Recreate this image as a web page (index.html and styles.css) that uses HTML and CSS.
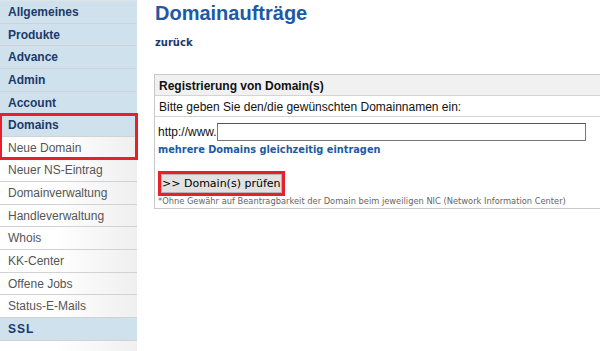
FILE: index.html
```html
<!DOCTYPE html>
<html lang="de">
<head>
  <meta charset="UTF-8">
  <meta name="viewport" content="width=device-width, initial-scale=1.0">
  <title>Domainaufträge</title>
  <link rel="stylesheet" href="styles.css">
</head>
<body>

  <div class="layout">
    <nav class="sidebar">
      <a class="nav-top" href="#">Allgemeines</a>
      <a class="nav-top" href="#">Produkte</a>
      <a class="nav-top" href="#">Advance</a>
      <a class="nav-top" href="#">Admin</a>
      <a class="nav-top" href="#">Account</a>
      <div class="marked">
        <a class="nav-top" href="#">Domains</a>
        <a class="nav-sub" href="#">Neue Domain</a>
      </div>
      <a class="nav-sub" href="#">Neuer NS-Eintrag</a>
      <a class="nav-sub" href="#">Domainverwaltung</a>
      <a class="nav-sub" href="#">Handleverwaltung</a>
      <a class="nav-sub" href="#">Whois</a>
      <a class="nav-sub" href="#">KK-Center</a>
      <a class="nav-sub" href="#">Offene Jobs</a>
      <a class="nav-sub" href="#">Status-E-Mails</a>
      <a class="nav-top ssl" href="#">SSL</a>
    </nav>

    <main class="content">
      <h1>Domainaufträge</h1>
      <a class="back" href="#">zurück</a>

      <div class="form-box">
        <div class="box-head">Registrierung von Domain(s)</div>
        <div class="box-row">Bitte geben Sie den/die gewünschten Domainnamen ein:</div>
        <div class="box-body">
          <div class="domain-line">
            <label for="domain">http://www.</label>
            <input type="text" id="domain">
          </div>
          <a class="multi" href="#">mehrere Domains gleichzeitig eintragen</a>
          <div class="check-wrap">
            <button class="check-button">&gt;&gt; Domain(s) prüfen</button>
          </div>
          <p class="note">*Ohne Gewähr auf Beantragbarkeit der Domain beim jeweiligen NIC (Network Information Center)</p>
        </div>
      </div>
    </main>
  </div>

</body>
</html>
```

FILE: styles.css
```css
body {
  margin: 0;
  font-family: "Liberation Sans", Arial, sans-serif;
  background-color: #fff;
  overflow: hidden;
}

.layout {
  display: flex;
  align-items: flex-start;
  height: 351px;
}

.sidebar {
  width: 137px;
  flex-shrink: 0;
  display: flex;
  flex-direction: column;
  border-top: 1px solid #dfe3e6;
  height: 350px;
  background: linear-gradient(to right, #fff 40%, #f0f0f0);
}

.sidebar a {
  display: block;
  height: 21.65px;
  line-height: 23px;
  padding-left: 8px;
  font-size: 12px;
  text-decoration: none;
  border-bottom: 1px solid #cfd3d6;
  overflow: hidden;
}

.nav-top {
  background-color: #d0e1ee;
  color: #1b3a6b;
  font-weight: bold;
}

.nav-sub {
  background: linear-gradient(to right, #fff 40%, #efefef);
  color: #555;
}

.ssl {
  letter-spacing: 1px;
}

.marked {
  outline: 3px solid #e8202a;
  outline-offset: -2px;
  position: relative;
}

.content {
  flex: 1;
  padding-left: 17px;
}

h1 {
  margin: 2px 0 0 1px;
  font-size: 20px;
  color: #1c5aa6;
  line-height: 22px;
}

.back {
  display: inline-block;
  margin: 13px 0 0 1px;
  font-family: "DejaVu Sans", Verdana, sans-serif;
  font-size: 10px;
  font-weight: bold;
  color: #1b3a6b;
  text-decoration: none;
}

.form-box {
  margin-top: 24px;
  width: 470px;
  border: 1px solid #c8c8c8;
  border-right: none;
  font-size: 12px;
}

.box-head {
  background-color: #f1f1f1;
  font-weight: bold;
  color: #111;
  padding: 4px 4px 2px;
  line-height: 14px;
  border-bottom: 1px solid #d4d4d4;
}

.box-row {
  padding: 4px 4px 2px;
  line-height: 14px;
  color: #111;
  border-bottom: 1px solid #d4d4d4;
}

.box-body {
  padding: 6px 0 2px 3px;
}

.domain-line {
  display: flex;
  align-items: center;
  color: #111;
}

.domain-line input {
  width: 369px;
  height: 18px;
  box-sizing: border-box;
  margin: 0;
  border: 1px solid #777;
  border-top-color: #555;
  padding: 0 2px;
}

.multi {
  display: block;
  margin-top: 3px;
  font-family: "DejaVu Sans", Verdana, sans-serif;
  font-size: 9.8px;
  font-weight: bold;
  color: #1c5aa6;
  text-decoration: none;
}

.check-wrap {
  display: inline-block;
  margin-top: 16px;
  border: 3px solid #e8202a;
}

.check-button {
  display: block;
  margin: 0;
  padding: 2px 0;
  font-family: "DejaVu Sans", Tahoma, sans-serif;
  font-size: 11px;
  color: #000;
  background-color: #e2e2e2;
  border: 1px solid #b5b5b5;
  border-radius: 0;
}

.note {
  margin: 0;
  font-family: "DejaVu Sans", Tahoma, sans-serif;
  font-size: 8.3px;
  color: #666;
}
```
